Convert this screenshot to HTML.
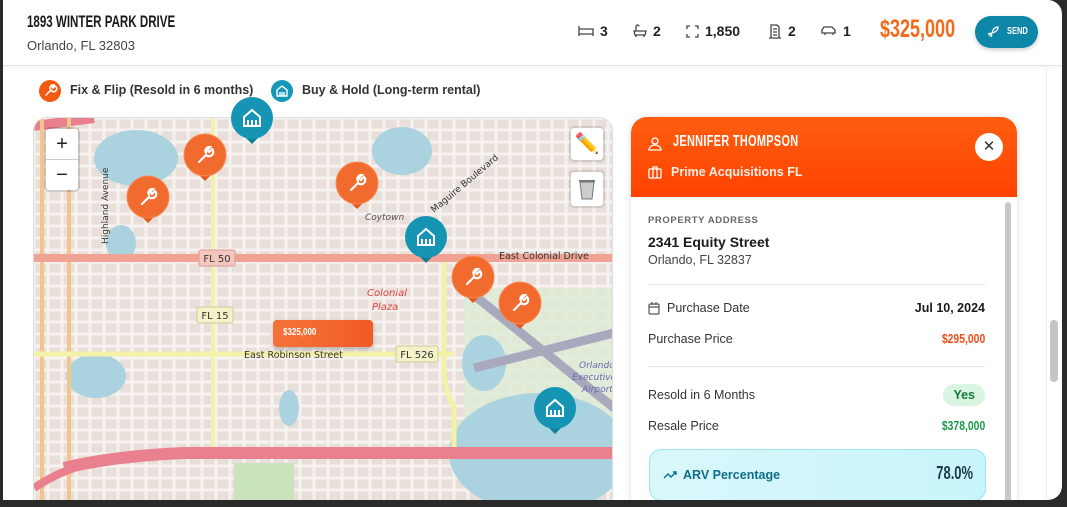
<!DOCTYPE html>
<html><head><meta charset="utf-8"><style>
*{margin:0;padding:0;box-sizing:border-box}
body{width:1067px;height:507px;background:#2a2a2a;overflow:hidden;font-family:"Liberation Sans",sans-serif;position:relative}
.win{position:absolute;left:3px;top:0;width:1059px;height:500px;background:#fff;border-radius:0 14px 14px 0;overflow:hidden}
.cond{font-family:"Liberation Sans",sans-serif;font-weight:700;display:inline-block;transform-origin:left center;white-space:nowrap}
.abs{position:absolute}
.hdr{position:absolute;left:0;top:0;width:1059px;height:66px;border-bottom:1px solid #e3e3e3;box-shadow:0 1px 3px rgba(0,0,0,.06)}
.stat{position:absolute;top:23px;font-size:14px;font-weight:700;color:#222;display:flex;align-items:center;gap:6px}
.card{position:absolute;left:628px;top:117px;width:386px;height:390px;border-radius:16px 16px 0 0;background:#fff;box-shadow:0 0 6px rgba(0,0,0,.15);overflow:hidden}
.row{position:absolute;left:17px;right:32px;font-size:12.5px;color:#333;display:flex;justify-content:space-between;align-items:center}
.money{font-weight:700;font-size:13px;display:inline-block;transform:scaleX(.8);transform-origin:right center}
</style></head><body>
<div class="win">
 <div class="hdr">
  <div class="abs cond" style="left:24px;top:12px;font-size:17px;color:#1a1a1a;transform:scaleX(.68)">1893 WINTER PARK DRIVE</div>
  <div class="abs" style="left:24px;top:38px;font-size:13px;color:#444">Orlando, FL 32803</div>
  <div class="stat" style="left:575px"><svg width="16" height="12" viewBox="0 0 16 12" fill="none" stroke="#444" stroke-width="1.3"><path d="M1 1v10M1 4h14v7M1 9h14"/></svg>3</div>
  <div class="stat" style="left:630px"><svg width="14" height="14" viewBox="0 0 14 14" fill="none" stroke="#444" stroke-width="1.3"><path d="M3 7V2.5a1.5 1.5 0 013 0M1 7h12l-1 4H2zM3 11v2M11 11v2"/></svg>2</div>
  <div class="stat" style="left:683px"><svg width="13" height="13" viewBox="0 0 13 13" fill="none" stroke="#444" stroke-width="1.3"><path d="M1 4V1h3M9 1h3v3M12 9v3H9M4 12H1V9"/></svg>1,850</div>
  <div class="stat" style="left:765px"><svg width="14" height="15" viewBox="0 0 14 15" fill="none" stroke="#444" stroke-width="1.3"><path d="M3 1h6l2 2v11H3zM1 14h12M5 5h4M5 8h4M5 11h4"/></svg>2</div>
  <div class="stat" style="left:818px"><svg width="16" height="12" viewBox="0 0 16 12" fill="none" stroke="#444" stroke-width="1.3"><path d="M1 8V5l2-3h8l3 3v3zM4 8v2M12 8v2"/></svg>1</div>
  <div class="abs cond" style="left:877px;top:15px;font-size:25px;color:#f26a1b;transform:scaleX(.72)">$325,000</div>
  <div class="abs" style="left:972px;top:16px;width:63px;height:32px;border-radius:16px;background:#0e86a8;color:#fff;box-shadow:0 2px 4px rgba(0,0,0,.2)"><svg class="abs" style="left:12px;top:10px" width="12" height="12" viewBox="0 0 12 12" fill="none" stroke="#fff" stroke-width="1.2"><path d="M2 10l3-3M4 11l1-3M1 8l3-1M5 7c1-4 3-6 6-6-0 3-2 5-6 6z"/></svg><span class="cond abs" style="left:32px;top:10px;font-size:10px;transform:scaleX(.75)">SEND</span></div>
 </div>
 <div class="abs" style="left:36px;top:80px;width:22px;height:22px;border-radius:50%;background:#f25a12"><svg width="22" height="22" viewBox="0 0 22 22" fill="none" stroke="#fff" stroke-width="1.5" stroke-linecap="round"><path d="M7 15l5-5M12 10a3 3 0 104-4l-2 2-1-1 2-2a3 3 0 00-3 5"/></svg></div>
 <div class="abs" style="left:67px;top:83px;font-size:12.5px;font-weight:700;color:#333">Fix &amp; Flip (Resold in 6 months)</div>
 <div class="abs" style="left:268px;top:80px;width:22px;height:22px;border-radius:50%;background:#1597b7"><svg width="22" height="22" viewBox="0 0 22 22" fill="none" stroke="#fff" stroke-width="1.4"><path d="M6 10l5-4 5 4v6H6zM9 16v-4M13 16v-4M11 16v-4"/></svg></div>
 <div class="abs" style="left:299px;top:83px;font-size:12.5px;font-weight:700;color:#333">Buy &amp; Hold (Long-term rental)</div>

 <div class="abs" style="left:30px;top:117px;width:580px;height:390px;border-radius:14px 14px 0 0;overflow:hidden;border:1px solid #ddd">
 <svg width="580" height="390" viewBox="0 0 580 390">
  <defs><pattern id="g" width="14" height="12" patternUnits="userSpaceOnUse"><rect width="14" height="12" fill="#f6f2ef"/><rect x="1.5" y="1.5" width="11" height="9" fill="#e8dfda"/></pattern></defs>
  <rect width="580" height="390" fill="url(#g)"/>
  <rect x="430" y="170" width="150" height="170" fill="#dcebd5" opacity=".8"/>
  <rect x="200" y="345" width="60" height="45" fill="#c9e4bd"/>
  <ellipse cx="102" cy="40" rx="42" ry="28" fill="#aad3df"/>
  <ellipse cx="87" cy="125" rx="15" ry="18" fill="#aad3df"/>
  <ellipse cx="368" cy="33" rx="30" ry="24" fill="#aad3df"/>
  <ellipse cx="62" cy="258" rx="30" ry="22" fill="#aad3df"/>
  <ellipse cx="505" cy="335" rx="90" ry="60" fill="#aad3df"/>
  <ellipse cx="450" cy="245" rx="22" ry="28" fill="#aad3df"/>
  <ellipse cx="255" cy="290" rx="10" ry="18" fill="#aad3df"/>
  <g stroke="#a9a9be" stroke-width="9"><path d="M425 165L580 290"/><path d="M440 250L580 215"/></g>
  <path d="M0 8L60 0" stroke="#e8808e" stroke-width="10"/>
  <path d="M8 0V390M35 0V390" stroke="#f5c48a" stroke-width="4"/>
  <path d="M179 0V335" stroke="#f4f2a8" stroke-width="4"/>
  <path d="M410 142V250Q410 270 420 290V340" stroke="#f4f2a8" stroke-width="5" fill="none"/>
  <path d="M0 236H420" stroke="#f4f2a8" stroke-width="5"/>
  <path d="M0 140H580" stroke="#f0a395" stroke-width="8"/>
  <path d="M30 350Q80 338 150 335H580" stroke="#e8808e" stroke-width="12" fill="none"/>
  <path d="M0 370Q30 350 60 345" stroke="#e8808e" stroke-width="8" fill="none"/>
  <rect x="165" y="132" width="36" height="16" rx="2" fill="#f5c6bd" stroke="#d99"/><text x="183" y="144" font-size="10" text-anchor="middle" fill="#333" font-family="DejaVu Sans">FL 50</text>
  <rect x="163" y="189" width="36" height="16" rx="2" fill="#f4f2c8" stroke="#cc9"/><text x="181" y="201" font-size="10" text-anchor="middle" fill="#333" font-family="DejaVu Sans">FL 15</text>
  <rect x="362" y="228" width="42" height="16" rx="2" fill="#f4f2c8" stroke="#cc9"/><text x="383" y="240" font-size="10" text-anchor="middle" fill="#333" font-family="DejaVu Sans">FL 526</text>
  <text x="210" y="240" font-size="9.5" fill="#333" font-family="DejaVu Sans">East Robinson Street</text>
  <text x="465" y="141" font-size="9.5" fill="#333" font-family="DejaVu Sans">East Colonial Drive</text>
  <text x="331" y="102" font-size="9" fill="#555" font-style="italic" font-family="DejaVu Sans">Coytown</text>
  <text x="333" y="178" font-size="10" fill="#d44" font-style="italic" font-family="DejaVu Sans">Colonial</text>
  <text x="338" y="192" font-size="10" fill="#d44" font-style="italic" font-family="DejaVu Sans">Plaza</text>
  <text x="545" y="250" font-size="9" fill="#6b6bb0" font-style="italic" font-family="DejaVu Sans">Orlando</text>
  <text x="538" y="262" font-size="9" fill="#6b6bb0" font-style="italic" font-family="DejaVu Sans">Executive</text>
  <text x="548" y="274" font-size="9" fill="#6b6bb0" font-style="italic" font-family="DejaVu Sans">Airport</text>
  <text x="400" y="95" font-size="9" fill="#333" font-family="DejaVu Sans" transform="rotate(-40 400 95)">Maguire Boulevard</text>
  <text x="74" y="126" font-size="9" fill="#333" font-family="DejaVu Sans" transform="rotate(-90 74 126)">Highland Avenue</text>
 </svg>
 <div class="abs" style="left:12px;top:11px;width:32px;height:61px;background:#fff;border-radius:3px;box-shadow:0 0 0 2px rgba(0,0,0,.15);font-size:20px;text-align:center;line-height:30px;color:#222">+<div style="border-top:1px solid #ccc">−</div></div>
 <div class="abs" style="left:537px;top:10px;width:32px;height:32px;background:#fff;border-radius:3px;box-shadow:0 0 0 2px rgba(0,0,0,.1);font-size:20px;text-align:center;line-height:32px">✏️</div>
 <div class="abs" style="left:537px;top:54px;width:32px;height:34px;background:#fff;border-radius:3px;box-shadow:0 0 0 2px rgba(0,0,0,.1)"><svg width="32" height="34" viewBox="0 0 32 34"><path d="M9 10h14l-2 17H11z" fill="#ccc" stroke="#777"/><path d="M8 9h16" stroke="#777" stroke-width="2"/></svg></div>
 </div>

 <svg class="abs" style="left:0;top:0" width="620" height="500">
  <defs>
   <g id="w"><path d="M-6 20L0 26L6 20Z" fill="#e8551a"/><circle r="21" fill="#f26b2e" stroke="#f58a55" stroke-width="1"/><path d="M-6 7l7-7M1 0a4 4 0 106-6l-3 3-2-2 3-3a4 4 0 00-4 6" fill="none" stroke="#fff" stroke-width="2.2" stroke-linecap="round"/></g>
   <g id="h"><path d="M-6 20L0 26L6 20Z" fill="#0d7f99"/><circle r="21" fill="#1594b4"/><path d="M-8 -1l8-7 8 7v9h-16zM-4 8v-6M0 8v-6M4 8v-6" fill="none" stroke="#fff" stroke-width="2"/></g>
  </defs>
  <use href="#h" x="249" y="118"/>
  <use href="#w" x="202" y="155"/>
  <use href="#w" x="145" y="197"/>
  <use href="#w" x="354" y="183"/>
  <use href="#h" x="423" y="237"/>
  <use href="#w" x="470" y="277"/>
  <use href="#w" x="517" y="303"/>
  <use href="#h" x="552" y="408"/>
 </svg>
 <div class="abs" style="left:270px;top:320px;width:100px;height:27px;border-radius:4px;background:linear-gradient(90deg,#f4733a,#f25a25);box-shadow:0 2px 4px rgba(0,0,0,.25)"><span class="cond" style="position:absolute;left:10px;top:7px;color:#fff;font-size:10px;transform:scaleX(.8)">$325,000</span></div>

 <div class="card">
  <div class="abs" style="left:0;top:0;width:386px;height:80px;background:linear-gradient(180deg,#ff5e10,#ff4200)">
   <svg class="abs" style="left:17px;top:20px" width="14" height="14" viewBox="0 0 14 14" fill="none" stroke="#fff" stroke-width="1.3"><circle cx="7" cy="4" r="3"/><path d="M1 13c0-3 3-5 6-5s6 2 6 5z"/></svg>
   <div class="abs cond" style="left:42px;top:16px;color:#fff;font-size:16px;letter-spacing:.5px;transform:scaleX(.68)">JENNIFER THOMPSON</div>
   <svg class="abs" style="left:17px;top:49px" width="14" height="13" viewBox="0 0 14 13" fill="none" stroke="#fff" stroke-width="1.3"><rect x="1" y="3" width="12" height="9" rx="1"/><path d="M5 3V1h4v2M5 3v9M9 3v9"/></svg>
   <div class="abs" style="left:40px;top:48px;color:#fff;font-size:12.5px;font-weight:700;opacity:.9">Prime Acquisitions FL</div>
   <div class="abs" style="left:344px;top:16px;width:28px;height:28px;border-radius:50%;background:#fff;text-align:center;line-height:28px;font-size:15px;color:#333">✕</div>
  </div>
  <div class="abs" style="left:374px;top:85px;width:6px;height:305px;background:#c8c8c8;border-radius:3px"></div>
  <div class="abs" style="left:17px;top:98px;font-size:9.5px;font-weight:700;color:#666;letter-spacing:.6px">PROPERTY ADDRESS</div>
  <div class="abs" style="left:17px;top:117px;font-size:14px;font-weight:700;color:#1a1a1a">2341 Equity Street</div>
  <div class="abs" style="left:17px;top:136px;font-size:12.5px;color:#444">Orlando, FL 32837</div>
  <div class="abs" style="left:17px;right:32px;top:167px;border-top:1px solid #e5e5e5"></div>
  <div class="row" style="top:184px"><span style="display:flex;align-items:center;gap:7px"><svg width="12" height="13" viewBox="0 0 12 13" fill="none" stroke="#555" stroke-width="1.2"><rect x="1" y="2" width="10" height="10" rx="1"/><path d="M1 5h10M4 0v3M8 0v3"/></svg>Purchase Date</span><b style="color:#1a1a1a">Jul 10, 2024</b></div>
  <div class="row" style="top:214px"><span>Purchase Price</span><span class="money" style="color:#e8501a">$295,000</span></div>
  <div class="abs" style="left:17px;right:32px;top:249px;border-top:1px solid #e5e5e5"></div>
  <div class="row" style="top:267px"><span>Resold in 6 Months</span><span style="background:#d8f5e2;color:#157a3c;font-weight:700;border-radius:11px;padding:4px 10px">Yes</span></div>
  <div class="row" style="top:301px"><span>Resale Price</span><span class="money" style="color:#1a9a4a">$378,000</span></div>
  <div class="abs" style="left:18px;top:332px;width:337px;height:52px;border-radius:12px;border:1px solid #9fe3ef;background:linear-gradient(90deg,#d9f7fb,#c8f5fb)">
   <svg class="abs" style="left:13px;top:20px" width="14" height="10" viewBox="0 0 14 10" fill="none" stroke="#0e6e88" stroke-width="1.4"><path d="M1 8l4-4 3 3 5-5M10 2h3v3"/></svg>
   <div class="abs" style="left:33px;top:18px;font-size:12.5px;font-weight:700;color:#0e6e88">ARV Percentage</div>
   <div class="abs" style="right:12px;top:13px;font-size:18px;font-weight:700;color:#1a3a4a;transform:scaleX(.72);transform-origin:right center">78.0%</div>
  </div>
 </div>
 <div class="abs" style="left:1047px;top:320px;width:8px;height:62px;border-radius:4px;background:#c4c4c4"></div>
 <div class="abs" style="left:1043px;top:66px;width:1px;height:434px;background:#eee"></div>
</div>
</body></html>
